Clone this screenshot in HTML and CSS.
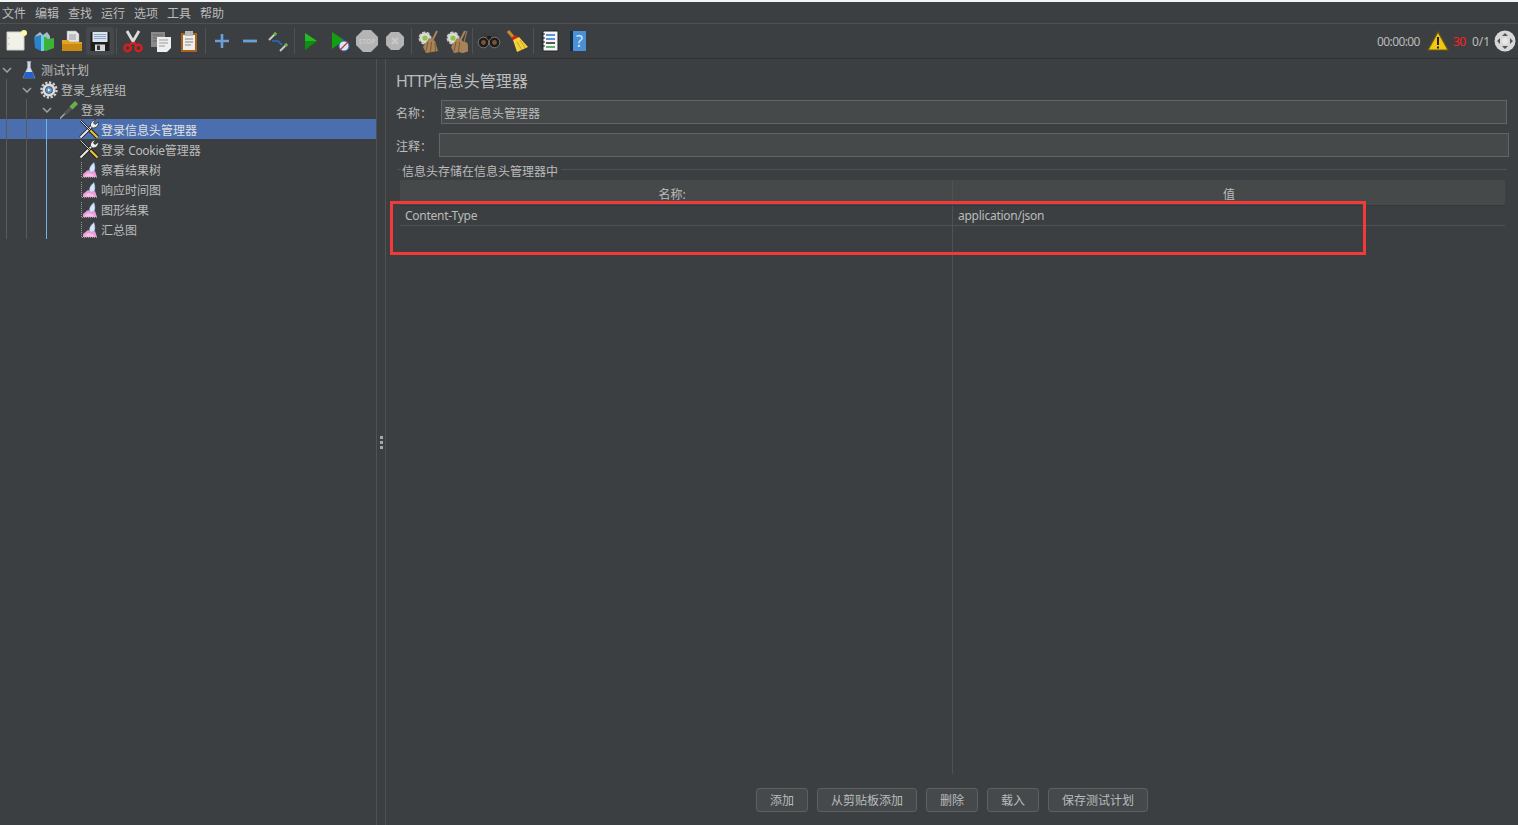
FILE: index.html
```html
<!DOCTYPE html>
<html lang="en">
<head>
  <meta charset="UTF-8">
  <title>HTTP信息头管理器</title>
  <link rel="stylesheet" href="styles.css">
</head>
<body>

<svg class="defs" width="0" height="0">
  <symbol id="chart" viewBox="0 0 18 18">
    <path d="M1.500 1v15.500H17" fill="none" stroke="#9a9a9a" stroke-width="1" stroke-dasharray="1 1"/>
    <path d="M3 16v-3l5-4 4 2 3-1 2 6z" fill="#ee9cd8"/>
    <path d="M4 15.500l4-3.500 5 1.500 2 2z" fill="#f6c0e8"/>
    <path d="M14 1.500c-3 2.500-5 5.500-4.500 8 .5 1.800 3.500 2 4.800 .4 1.200-2.200.4-5.900-.3-8.400z" fill="#d8e6fb" stroke="#8fb0e0" stroke-width=".5"/>
  </symbol>
  <symbol id="tools" viewBox="0 0 20 20">
    <path d="M1.500 18.500L13 7" stroke="#1e1e1e" stroke-width="3.800"/>
    <path d="M1.500 18.500L13 7" stroke="#ececec" stroke-width="2"/>
    <path d="M12 8c-1.500-2.500 0-6 4.500-7.500l-2 3.500 1.500 1.500 3.500-2.500c.3 4.500-4 7.500-7.500 5z" fill="#ececec" stroke="#222" stroke-width=".7"/>
    <path d="M1.500 1.500L12 12" stroke="#222" stroke-width="2.200"/>
    <path d="M1.500 1.500L12 12" stroke="#d8d8d8" stroke-width="1"/>
    <path d="M11.500 11.500l7 7" stroke="#222" stroke-width="4"/>
    <path d="M11.500 11.500l7 7" stroke="#eec22c" stroke-width="2.200"/>
  </symbol>
  <symbol id="broom" viewBox="0 0 24 24">
    <circle cx="9" cy="9" r="5.500" fill="#dcdcdc" stroke="#c8c8c8" stroke-dasharray="3 1.500" stroke-width="2"/>
    <circle cx="9" cy="9" r="2.600" fill="#8ec63f"/>
    <path d="M21 2l-5 10" stroke="#a8835a" stroke-width="2"/>
    <path d="M13 9l6 3 3 10-12 2-3-6z" fill="#a98358"/>
    <path d="M12 13l-2 9M15.500 13l-1 10M19 14l.5 8" stroke="#74552f" stroke-width=".9"/>
  </symbol>
</svg>

<div class="menubar">
  <span>文件</span>
  <span>编辑</span>
  <span>查找</span>
  <span>运行</span>
  <span>选项</span>
  <span>工具</span>
  <span>帮助</span>
</div>

<div class="toolbar">
  <div class="tool"><svg viewBox="0 0 24 24"><path d="M3 3h17v18H3z" fill="#f1f1ea" stroke="#cfcfc8"/><circle cx="5" cy="9" r=".6" fill="#999"/><circle cx="5" cy="15" r=".6" fill="#999"/><circle cx="20" cy="4" r="3" fill="#fff7a8"/></svg></div>
  <div class="tool"><svg viewBox="0 0 24 24"><path d="M3 7l5-4 3 3 4-3 3 4v3H3z" fill="#a8bcc8"/><path d="M2 8l7-2v16l-6-3z" fill="#2b82c9"/><path d="M9 8h5l2 2 6-1v10l-8 3-5-1z" fill="#3bb33b"/><path d="M9 6h3v16H9z" fill="#6ad0e0"/></svg></div>
  <div class="tool"><svg viewBox="0 0 24 24"><path d="M7 2h9l3 3v8H7z" fill="#e6e6e6" stroke="#999" stroke-width=".5"/><path d="M9 6h7M9 8h7M9 10h7" stroke="#999"/><path d="M2 11h6l2 2h12v8H2z" fill="#e0a526"/><path d="M2 15h20v7H2z" fill="#c98a14"/></svg></div>
  <div class="tool tool-hover"><svg viewBox="0 0 24 24"><path d="M2.500 3h19v19h-19z" fill="#1e1e1e"/><path d="M4.500 3h15v10h-15z" fill="#d9e3ee"/><path d="M6 5.500h12M6 7.500h12M6 9.500h12" stroke="#8fa8c8"/><path d="M7 15.500h10v6.500H7z" fill="#d6d6d6"/><path d="M9 16.500h3v4.500H9z" fill="#333"/></svg></div>
  <i class="sep"></i>
  <div class="tool"><svg viewBox="0 0 24 24"><path d="M6 2l7 12M18 2l-7 12" stroke="#dcdcdc" stroke-width="2.800"/><circle cx="6.500" cy="19" r="3.200" fill="none" stroke="#d81e1e" stroke-width="2.400"/><circle cx="17.500" cy="19" r="3.200" fill="none" stroke="#d81e1e" stroke-width="2.400"/><path d="M9 16l2.500-3M15 16l-2.500-3" stroke="#d81e1e" stroke-width="2.200"/></svg></div>
  <div class="tool"><svg viewBox="0 0 24 24"><path d="M2 3h14v15H2z" fill="#8a8a8a"/><path d="M4 6h10M4 9h10M4 12h10" stroke="#666"/><path d="M8 8h14v11l-4 4H8z" fill="#eeeeee"/><path d="M10 11h9M10 14h9M10 17h6" stroke="#999"/></svg></div>
  <div class="tool"><svg viewBox="0 0 24 24"><path d="M4 4h16v19H4z" fill="#a8651a"/><path d="M6 6h12v15H6z" fill="#eeeeee"/><path d="M8 2h8v5H8z" fill="#b8b8b8"/><path d="M8 10h8M8 13h8M8 16h6" stroke="#888"/></svg></div>
  <i class="sep"></i>
  <div class="tool"><svg viewBox="0 0 24 24"><path d="M12 5v14M5 12h14" stroke="#6a9fd8" stroke-width="2.600"/></svg></div>
  <div class="tool"><svg viewBox="0 0 24 24"><path d="M5 12h14" stroke="#6a9fd8" stroke-width="2.800"/></svg></div>
  <div class="tool"><svg viewBox="0 0 24 24"><path d="M3 11l7-7" stroke="#c8c8c8" stroke-width="2"/><path d="M8 6l2-2" stroke="#6cb04a" stroke-width="3"/><path d="M14 22l7-7" stroke="#c8c8c8" stroke-width="2"/><path d="M19 17l2-2" stroke="#6cb04a" stroke-width="3"/><path d="M6 12h6l4 4" fill="none" stroke="#1f6fd0" stroke-width="1.600"/></svg></div>
  <i class="sep"></i>
  <div class="tool"><svg viewBox="0 0 24 24"><path d="M6 4l12 8-12 9z" fill="#0f8f0f"/><path d="M6 4l12 8H6z" fill="#26b826"/></svg></div>
  <div class="tool"><svg viewBox="0 0 24 24"><path d="M5 3l12 8-12 9z" fill="#12a012"/><circle cx="17" cy="17" r="5" fill="#dce6f5" stroke="#3a6cc0"/><path d="M13 21l8-8" stroke="#d03030" stroke-width="1.300"/></svg></div>
  <div class="tool"><svg viewBox="0 0 24 24"><path d="M8 1h8l7 7v8l-7 7H8l-7-7V8z" fill="#b4b4b4"/><text x="12" y="14.500" class="stop-text">STOP</text></svg></div>
  <div class="tool"><svg viewBox="0 0 24 24"><path d="M8 3h8l5 5v8l-5 5H8l-5-5V8z" fill="#b4b4b4"/><path d="M9 9l6 6M15 9l-6 6" stroke="#c8c8c8" stroke-width="2.400"/></svg></div>
  <i class="sep"></i>
  <div class="tool"><svg viewBox="0 0 24 24"><use href="#broom" width="24" height="24"/></svg></div>
  <div class="tool"><svg viewBox="0 0 24 24"><use href="#broom" width="24" height="24"/><path d="M23 2l-3 11M18 13l5 1 1 8-7 2z" stroke="#a8835a" fill="#a98358"/></svg></div>
  <i class="sep"></i>
  <div class="tool"><svg viewBox="0 0 24 24"><path d="M4 6l2-2h4v7H3zM20 6l-2-2h-4v7h7z" fill="#3a3a3a"/><path d="M10 7h4v5h-4z" fill="#1c1c1c"/><circle cx="6.500" cy="13.500" r="5.300" fill="#1c1c1c" stroke="#8a8a8a" stroke-width=".8"/><circle cx="17.500" cy="13.500" r="5.300" fill="#1c1c1c" stroke="#8a8a8a" stroke-width=".8"/><circle cx="6.500" cy="13.500" r="2.400" fill="#7a5434"/><circle cx="17.500" cy="13.500" r="2.400" fill="#7a5434"/></svg></div>
  <div class="tool"><svg viewBox="0 0 24 24"><path d="M3 2l6 7" stroke="#c98a2a" stroke-width="3.200"/><path d="M6 9l5-3 3 3-4 4z" fill="#d02020"/><path d="M8 11l6-3 9 10-11 5z" fill="#f4d43a"/><path d="M12 13l5 8M15 11l5 8" stroke="#c8a020"/></svg></div>
  <i class="sep"></i>
  <div class="tool"><svg viewBox="0 0 24 24"><path d="M5 2h15v20H5z" fill="#f4f4f4" stroke="#222"/><path d="M8 6h9M8 10h9" stroke="#2a70c8" stroke-width="1.500"/><path d="M8 14h9" stroke="#222" stroke-width="1.500"/><path d="M8 18h9" stroke="#2a9a40" stroke-width="1.500"/><path d="M3 5h4M3 9h4M3 13h4M3 17h4" stroke="#222" stroke-width="1.200"/></svg></div>
  <div class="tool"><svg viewBox="0 0 24 24"><path d="M4 2h4v20H4z" fill="#1c2a3a"/><path d="M7 2h13v20H7z" fill="#4a90d8"/><text x="13.500" y="18" class="help-text">?</text></svg></div>

  <div class="status">
    <span class="timer">00:00:00</span>
    <svg class="warn" viewBox="0 0 22 20"><path d="M11 1l10 18H1z" fill="#f0c814" stroke="#6a5a10" stroke-width="1.200"/><path d="M11 6v8M11 15.500v2" stroke="#222" stroke-width="2"/></svg>
    <span class="errors">30</span>
    <span class="threads">0/1</span>
    <svg class="globe" viewBox="0 0 22 22"><circle cx="11" cy="11" r="10.500" fill="#d8d8d8"/><path d="M11 3l3 3H8zM11 19l3-3H8zM3 11l3-3v6zM19 11l-3-3v6z" fill="#555"/><circle cx="11" cy="11" r="3" fill="#e8e8e8"/></svg>
  </div>
</div>

<div class="main">
  <div class="tree">
    <i class="guide guide-1"></i>
    <i class="guide guide-2"></i>
    <i class="guide guide-3"></i>

    <div class="row lvl-0">
      <span class="toggle"><svg viewBox="0 0 10 6"><path d="M1 1l4 4 4-4" /></svg></span>
      <svg class="node" viewBox="0 0 18 18"><path d="M7 .5h4v.8h-.6v5.200l4.600 10.500H3L7.600 6.500V1.300H7z" fill="#d4dde8" stroke="#aab4c0" stroke-width=".5"/><path d="M5.500 11h7l2.500 6H3z" fill="#2362c8"/></svg>
      <span>测试计划</span>
    </div>
    <div class="row lvl-1">
      <span class="toggle"><svg viewBox="0 0 10 6"><path d="M1 1l4 4 4-4" /></svg></span>
      <svg class="node" viewBox="0 0 18 18"><circle cx="9" cy="9" r="6.500" fill="#dcdcdc"/><circle cx="9" cy="9" r="7.500" fill="none" stroke="#cfcfcf" stroke-width="2.400" stroke-dasharray="2.300 1.600"/><circle cx="9" cy="9" r="3.800" fill="#3a3f44"/><circle cx="9" cy="9" r="3" fill="#5a9ad8"/><path d="M8 7.500l2.500 1.500L8 10.500z" fill="#fff"/></svg>
      <span>登录_线程组</span>
    </div>
    <div class="row lvl-2">
      <span class="toggle"><svg viewBox="0 0 10 6"><path d="M1 1l4 4 4-4" /></svg></span>
      <svg class="node" viewBox="0 0 18 18"><path d="M0 17.500l8-8" stroke="#aaa" stroke-width="1.500"/><path d="M5 13l6-6" stroke="#555" stroke-width="3.400"/><path d="M11 7l5.500-5.500" stroke="#6ab04a" stroke-width="4.200"/></svg>
      <span>登录</span>
    </div>
    <div class="row lvl-3 selected">
      <span class="toggle"></span>
      <svg class="node node-wide"><use href="#tools"/></svg>
      <span>登录信息头管理器</span>
    </div>
    <div class="row lvl-3">
      <span class="toggle"></span>
      <svg class="node node-wide"><use href="#tools"/></svg>
      <span>登录 <span class="latin-tree">Cookie</span>管理器</span>
    </div>
    <div class="row lvl-3">
      <span class="toggle"></span>
      <svg class="node"><use href="#chart"/></svg>
      <span>察看结果树</span>
    </div>
    <div class="row lvl-3">
      <span class="toggle"></span>
      <svg class="node"><use href="#chart"/></svg>
      <span>响应时间图</span>
    </div>
    <div class="row lvl-3">
      <span class="toggle"></span>
      <svg class="node"><use href="#chart"/></svg>
      <span>图形结果</span>
    </div>
    <div class="row lvl-3">
      <span class="toggle"></span>
      <svg class="node"><use href="#chart"/></svg>
      <span>汇总图</span>
    </div>
  </div>

  <div class="splitter"><i></i><i></i><i></i></div>

  <div class="panel">
    <h2><span class="latin-title">HTTP</span>信息头管理器</h2>

    <div class="field field-name">
      <label>名称：</label>
      <input type="text" value="登录信息头管理器">
    </div>
    <div class="field field-note">
      <label>注释：</label>
      <input type="text">
    </div>

    <div class="group-title">
      <span>信息头存储在信息头管理器中</span>
    </div>

    <div class="table">
      <div class="thead">
        <div class="th">名称:</div>
        <div class="th">值</div>
      </div>
      <div class="tr">
        <div class="td">Content-Type</div>
        <div class="td">application/json</div>
      </div>
      <div class="tbody-rest"></div>
    </div>

    <div class="buttons">
      <button>添加</button>
      <button>从剪贴板添加</button>
      <button>删除</button>
      <button>载入</button>
      <button>保存测试计划</button>
    </div>

    <div class="redbox"></div>
  </div>
</div>

</body>
</html>
```

FILE: styles.css
```css
* {
  box-sizing: border-box;
}
html, body {
  height: 100%;
}
body {
  margin: 0;
  padding-top: 2px;
  background-color: #f4f4f4;
  font-family: "Noto Sans", "Noto Sans CJK SC", sans-serif;
  font-size: 12px;
  color: #bbbbbb;
  display: flex;
  flex-direction: column;
  overflow: hidden;
}
.defs {
  position: absolute;
}

/* menu */
.menubar {
  height: 22px;
  flex: none;
  padding-left: 2px;
  display: flex;
  gap: 9px;
  align-items: center;
  background: #3c3f41;
  border-bottom: 1px solid #515151;
}

/* toolbar */
.toolbar {
  height: 35px;
  flex: none;
  padding-left: 2px;
  display: flex;
  align-items: center;
  background: #3c3f41;
  border-bottom: 1px solid #323232;
}
.tool {
  width: 28px;
  height: 28px;
  flex: none;
  display: flex;
  align-items: center;
  justify-content: center;
  border-radius: 3px;
}
.tool svg {
  width: 24px;
  height: 24px;
}
.tool-hover {
  background: #45494b;
}
.sep {
  width: 5px;
  height: 26px;
  flex: none;
  background: linear-gradient(#515151, #515151) center / 1px 100% no-repeat;
}
.stop-text {
  font-size: 6.500px;
  font-weight: bold;
  fill: #c8c8c8;
  text-anchor: middle;
}
.help-text {
  font-size: 16px;
  fill: #d8e8fa;
  text-anchor: middle;
}
.status {
  margin-left: auto;
  padding-right: 2px;
  display: flex;
  align-items: center;
}
.timer {
  width: 42px;
  margin-right: 8px;
  letter-spacing: -.6px;
}
.warn {
  width: 22px;
  height: 20px;
  margin-right: 4px;
}
.errors {
  width: 19px;
  color: #ff2020;
  letter-spacing: -.5px;
}
.threads {
  width: 22px;
}
.globe {
  width: 22px;
  height: 22px;
}

/* main split */
.main {
  flex: 1;
  min-height: 0;
  display: flex;
  background: #3c3f41;
}
.tree {
  width: 376px;
  flex: none;
  position: relative;
}
.row {
  height: 20px;
  padding-top: 2px;
  display: flex;
  align-items: center;
  white-space: pre;
}
.lvl-0 { padding-left: 0; }
.lvl-1 { padding-left: 20px; }
.lvl-2 { padding-left: 40px; }
.lvl-3 { padding-left: 60px; }
.selected {
  background: #4b6eaf;
  color: #e0e0e0;
}
.latin-tree {
  letter-spacing: -.3px;
}
.toggle {
  width: 20px;
  flex: none;
  display: flex;
  padding-left: 2px;
}
.toggle svg {
  width: 10px;
  height: 6px;
  fill: none;
  stroke: #a0a0a0;
  stroke-width: 1.500;
}
.node {
  width: 18px;
  height: 18px;
  flex: none;
  margin-right: 3px;
}
.node-wide {
  width: 20px;
  height: 20px;
  margin: -2px 2px 0 -1px;
}
.guide {
  position: absolute;
  width: 1px;
  background: #5a5a5a;
}
.guide-1 { left: 6px; top: 20px; height: 160px; }
.guide-2 { left: 26px; top: 40px; height: 140px; }
.guide-3 { left: 46px; top: 60px; height: 120px; background: #6eb4f0; }

.splitter {
  width: 10px;
  flex: none;
  display: flex;
  flex-direction: column;
  align-items: center;
  justify-content: center;
  gap: 2px;
  border-left: 1px solid #515151;
  border-right: 1px solid #515151;
}
.splitter i {
  width: 3px;
  height: 3px;
  background: #a8a8a8;
}

/* right panel */
.panel {
  flex: 1;
  min-width: 0;
  position: relative;
  display: flex;
  flex-direction: column;
  padding: 11px 0 0 10px;
}
h2 {
  margin: 0 0 8px;
  height: 22px;
  line-height: 22px;
  font-size: 16px;
  font-weight: normal;
}
.latin-title {
  letter-spacing: -1px;
}
.field {
  height: 24px;
  display: flex;
  align-items: center;
}
.field label {
  flex: none;
  padding-top: 2px;
}
.field input {
  flex: 1;
  height: 24px;
  min-width: 0;
  padding: 2px 2px 0;
  font: inherit;
  color: inherit;
  background: #45494a;
  border: 1px solid #646464;
  outline: none;
}
.field-name {
  padding-right: 11px;
  margin-bottom: 9px;
}
.field-name label { width: 45px; }
.field-note {
  padding-right: 9px;
}
.field-note label { width: 43px; }

.group-title {
  height: 14px;
  margin: 6px 11px 0 1px;
  padding-left: 4px;
  display: flex;
  align-items: center;
  background: linear-gradient(#515151, #515151) 0 6px / 100% 1px no-repeat;
}
.group-title span {
  padding: 2px 3px 0 1px;
  background: #3c3f41;
}
.table {
  flex: 1;
  min-height: 0;
  margin: 3px 13px 0 4px;
  display: flex;
  flex-direction: column;
}
.thead {
  height: 26px;
  flex: none;
  display: grid;
  grid-template-columns: 553px 1fr;
  background: #45494a;
  border-bottom: 1px solid #353739;
}
.th {
  padding-top: 5px;
  text-align: center;
  line-height: 20px;
}
.th:first-child {
  padding-right: 8px;
  border-right: 1px solid #515151;
}
.tr {
  height: 20px;
  flex: none;
  display: grid;
  grid-template-columns: 553px 1fr;
  border-bottom: 1px solid #515151;
}
.td {
  padding-left: 5px;
  line-height: 19px;
  letter-spacing: -.25px;
}
.td:first-child {
  border-right: 1px solid #515151;
}
.tbody-rest {
  flex: 1;
  width: 553px;
  border-right: 1px solid #515151;
}
.buttons {
  height: 51px;
  flex: none;
  margin-left: -10px;
  padding-top: 14px;
  display: flex;
  justify-content: center;
  gap: 9px;
}
button {
  height: 24px;
  padding: 0 13px;
  font: inherit;
  color: inherit;
  background: #45494b;
  border: 1px solid #5e6060;
  border-radius: 3px;
}
.redbox {
  position: absolute;
  left: 4px;
  top: 142px;
  width: 976px;
  height: 54px;
  border: 3px solid #f23a3a;
}
```
